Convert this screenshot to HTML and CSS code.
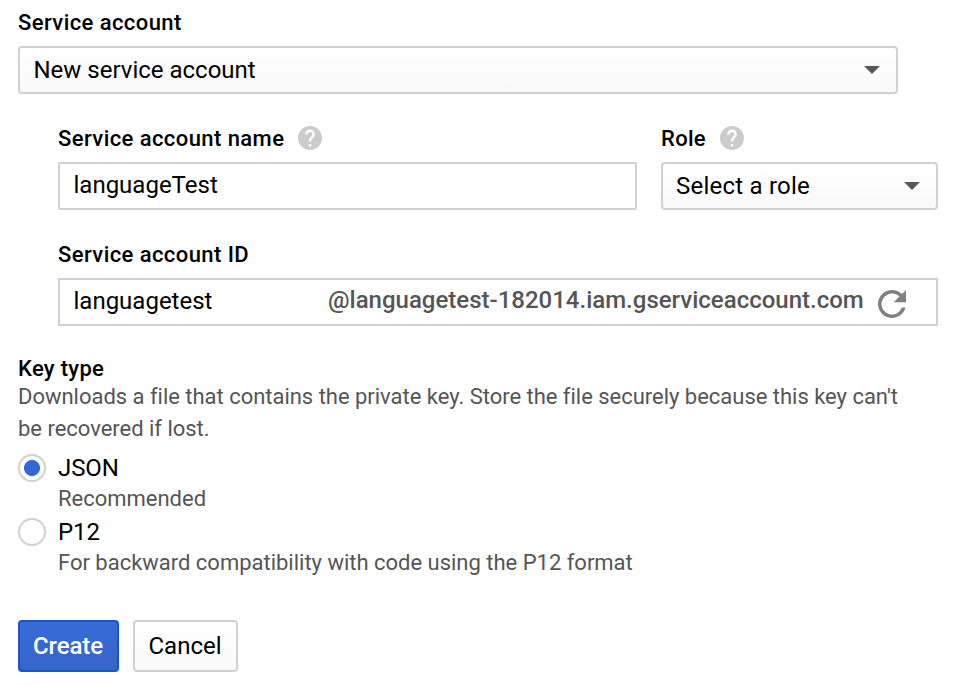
FILE: index.html
```html
<!DOCTYPE html>
<html lang="en">
<head>
<meta charset="utf-8">
<title>Create service account key</title>
<link rel="stylesheet" href="styles.css">
</head>
<body>
<form class="form">
  <div class="label"><span>Service account</span></div>
  <div class="select select-account"><span>New service account</span><i class="caret"></i></div>
  <div class="nested">
    <div class="row">
      <div class="col-name">
        <div class="label"><span>Service account name</span>
          <svg class="help" viewBox="2 2 20 20"><path d="M12 2C6.480 2 2 6.480 2 12s4.480 10 10 10 10-4.480 10-10S17.520 2 12 2zm1 17h-2v-2h2v2zm2.070-7.750l-.9.920C13.450 12.900 13 13.500 13 15h-2v-.5c0-1.100.45-2.100 1.170-2.830l1.240-1.260c.37-.36.59-.86.59-1.410 0-1.100-.9-2-2-2s-2 .9-2 2H8c0-2.210 1.790-4 4-4s4 1.790 4 4c0 .88-.36 1.680-.93 2.250z"/></svg></div>
        <div class="field"><span>languageTest</span></div>
      </div>
      <div class="col-role">
        <div class="label label-role"><span>Role</span>
          <svg class="help" viewBox="2 2 20 20"><path d="M12 2C6.480 2 2 6.480 2 12s4.480 10 10 10 10-4.480 10-10S17.520 2 12 2zm1 17h-2v-2h2v2zm2.070-7.750l-.9.920C13.450 12.900 13 13.500 13 15h-2v-.5c0-1.100.45-2.100 1.170-2.830l1.240-1.260c.37-.36.59-.86.59-1.410 0-1.100-.9-2-2-2s-2 .9-2 2H8c0-2.210 1.790-4 4-4s4 1.790 4 4c0 .88-.36 1.680-.93 2.250z"/></svg></div>
        <div class="select"><span class="role-value">Select a role</span><i class="caret"></i></div>
      </div>
    </div>
    <div class="label label-id"><span>Service account ID</span></div>
    <div class="field field-id"><span class="id">languagetest</span><span class="domain">@languagetest-182014.iam.gserviceaccount.com</span>
      <svg class="refresh" viewBox="4 4 16 16"><path d="M17.650 6.350A7.958 7.958 0 0 0 12 4a8 8 0 1 0 7.730 10h-2.080A6 6 0 1 1 12 6c1.660 0 3.140.69 4.220 1.780L13 11h7V4z"/></svg></div>
  </div>
  <div class="label label-key"><span>Key type</span></div>
  <p class="hint hint-key">Downloads a file that contains the private key. Store the file securely because this key can't<br>be recovered if lost.</p>
  <div class="option"><i class="radio on"></i><div><div class="choice">JSON</div><div class="hint">Recommended</div></div></div>
  <div class="option"><i class="radio"></i><div><div class="choice">P12</div><div class="hint">For backward compatibility with code using the P12 format</div></div></div>
  <div class="actions"><button type="button" class="btn primary">Create</button><button type="button" class="btn">Cancel</button></div>
</form>
</body>
</html>
```
FILE: styles.css
```css
* { box-sizing: border-box; }
body {
  margin: 0;
  background: #fff;
  color: #000;
  font-family: Roboto, sans-serif;
  font-size: 24px;
}
.form { padding: 6px 20px 0 18px; }
.label {
  display: flex;
  align-items: center;
  height: 32px;
  margin-bottom: 8px;
  font-size: 22px;
  font-weight: 500;
  letter-spacing: 0.42px;
  line-height: 32px;
  white-space: nowrap;
}
.label span { padding-top: 2px; }
.select, .field {
  display: flex;
  align-items: center;
  height: 48px;
  padding: 0 16px 0 13.5px;
  border: 2px solid #d1d1d1;
  line-height: 44px;
  white-space: nowrap;
}
.select {
  justify-content: space-between;
  border-radius: 4px;
  background: linear-gradient(#fff, #f9f9f9);
}
.select-account { width: 880px; }
.caret {
  border: 8px solid transparent;
  border-top-color: #585858;
  border-bottom: 0;
}
.nested { padding: 28px 0 0 40px; }
.row { display: flex; gap: 24px; }
.col-name { width: 579px; }
.col-role { width: 277px; }
.role-value { margin-left: -0.5px; letter-spacing: 0.23px; }
.field { border-radius: 2px; padding-bottom: 2px; }
.help { width: 24px; height: 24px; margin-left: 14px; fill: #ccc; }
.label-role { letter-spacing: 0.3px; }
.label-id { margin-top: 28px; }
.field-id { border-radius: 0; }
.id { width: 254.5px; }
.domain { color: #555; font-weight: 500; padding-bottom: 2px; }
.refresh { width: 28px; height: 28px; margin: 6px 0 0 14px; fill: #808080; }
.label-key { height: 28px; margin: 28px 0 0; letter-spacing: 0.3px; }
.hint { margin: 0; font-size: 22px; line-height: 32px; letter-spacing: -0.01px; color: #555; white-space: nowrap; }
.hint-key { margin-top: -1px; margin-bottom: 7px; letter-spacing: -0.02px; }
.option { display: flex; gap: 12px; height: 64px; }
.radio {
  width: 28px;
  height: 28px;
  margin-top: 2px;
  border: 2px solid #d1d1d1;
  border-radius: 50%;
}
.radio.on { background: radial-gradient(circle, #3367d6 7.6px, #fff 8.4px); }
.choice { height: 31px; padding-top: 1px; line-height: 30px; letter-spacing: -0.1px; }
.actions { display: flex; gap: 14px; margin-top: 40px; }
.btn {
  width: 105px;
  height: 52px;
  padding: 0 1px 0 0;
  border: 2px solid #d1d1d1;
  border-radius: 4px;
  background: linear-gradient(#fff, #f9f9f9);
  color: #000;
  font: 24px Roboto, sans-serif;
}
.btn.primary {
  width: 101px;
  border-color: #1a56c6;
  background: linear-gradient(#376bd6, #3665c8);
  color: #fff;
  font-weight: 500;
  letter-spacing: -0.1px;
}
```
